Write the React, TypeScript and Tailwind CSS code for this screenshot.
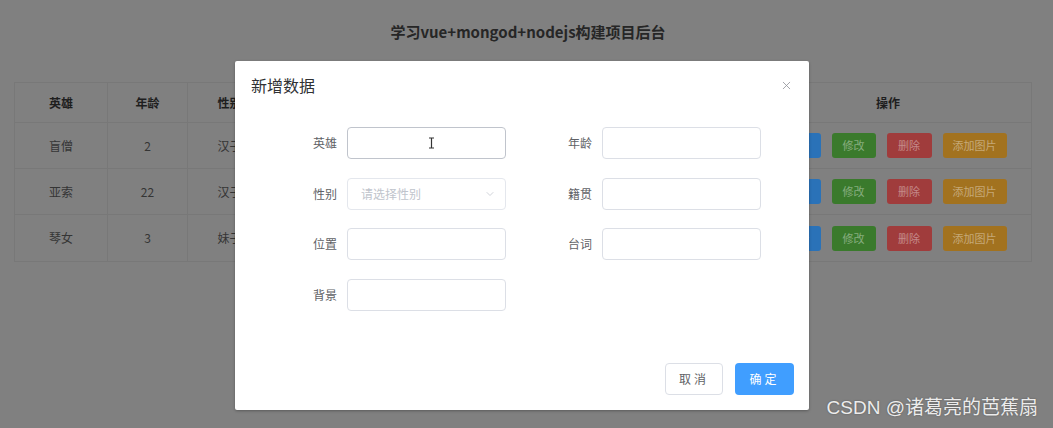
import { X, ChevronDown } from 'lucide-react';

const font = { fontFamily: '"Noto Sans CJK SC", "Noto Sans", sans-serif' };

const heroes = [
  { name: '盲僧', age: '2', sex: '汉子' },
  { name: '亚索', age: '22', sex: '汉子' },
  { name: '琴女', age: '3', sex: '妹子' },
];

function ActionButtons() {
  return (
    <div className="ml-[7px] flex items-center justify-center gap-[11px] text-[11px] text-white/40">
      <span className="w-[44px] h-[25px] rounded-[3px] bg-[#2a72b8] flex items-center justify-center">查看</span>
      <span className="w-[44px] h-[25px] rounded-[3px] bg-[#3a7a2c] flex items-center justify-center">修改</span>
      <span className="w-[45px] h-[25px] rounded-[3px] bg-[#a03c3c] flex items-center justify-center">删除</span>
      <span className="w-[64px] h-[25px] rounded-[3px] bg-[#a2721f] flex items-center justify-center">添加图片</span>
    </div>
  );
}

function Field({ label, children }: { label: string; children?: React.ReactNode }) {
  return (
    <div className="flex items-center">
      <label className="w-[70px] pr-[10px] text-right text-[12px] text-[#606266]">{label}</label>
      {children ?? (
        <input className="w-[159px] h-8 rounded-[4px] border border-[#dcdfe6] bg-white outline-none" />
      )}
    </div>
  );
}

export default function App() {
  return (
    <div className="relative w-[1053px] h-[428px] overflow-hidden bg-[#808080]" style={font}>
      {/* 背景页面（已被遮罩） */}
      <div className="pt-[22px]">
        <h1 className="text-center text-[15px] font-bold text-[#262626] leading-5 pl-[3px]">
          学习vue+mongod+nodejs构建项目后台
        </h1>
        <div className="mx-[14px] mt-[40px] w-[1018px] border border-[#787878] text-[12px] text-[#353535]">
          <div className="flex h-10 items-center font-bold text-[#1e1e1e] border-b border-[#787878]">
            <div className="w-[93px] h-full flex items-center justify-center border-r border-[#787878]">英雄</div>
            <div className="w-[80px] h-full flex items-center justify-center border-r border-[#787878]">年龄</div>
            <div className="w-[84px] h-full flex items-center justify-center border-r border-[#787878]">性别</div>
            <div className="flex-1 h-full border-r border-[#787878]" />
            <div className="w-[286px] h-full flex items-center justify-center">操作</div>
          </div>
          {heroes.map((h, i) => (
            <div key={i} className={`flex h-[46px] items-center ${i < 2 ? 'border-b border-[#787878]' : ''}`}>
              <div className="w-[93px] h-full flex items-center justify-center border-r border-[#787878]">{h.name}</div>
              <div className="w-[80px] h-full flex items-center justify-center border-r border-[#787878]">{h.age}</div>
              <div className="w-[84px] h-full flex items-center justify-center border-r border-[#787878]">{h.sex}</div>
              <div className="flex-1 h-full border-r border-[#787878]" />
              <div className="w-[286px] h-full flex items-center justify-center">
                <ActionButtons />
              </div>
            </div>
          ))}
        </div>
      </div>

      {/* 新增数据弹窗 */}
      <div className="absolute left-[235px] top-[61px] w-[574px] h-[349px] bg-white rounded-[2px] shadow-[0_1px_3px_rgba(0,0,0,0.3)] flex flex-col">
        <div className="flex items-center justify-between pl-4 pr-[16px] pt-[13px]">
          <span className="text-[16px] leading-[22px] text-[#303133]">新增数据</span>
          <X className="w-[13px] h-[13px] text-[#909399]" strokeWidth={1.5} />
        </div>
        <div className="grid grid-cols-[229px_229px] gap-x-[26px] gap-y-[18.5px] pl-[42px] mt-[31px]">
          <Field label="英雄">
            <div className="relative w-[159px] h-8 rounded-[4px] border border-[#c0c4cc] bg-white">
              <svg className="absolute left-[80px] top-[9px]" width="7" height="12" viewBox="0 0 7 12">
                <path d="M1 1h5M3.5 1v10M1 11h5" stroke="#333" strokeWidth="1.2" fill="none" />
              </svg>
            </div>
          </Field>
          <Field label="年龄" />
          <Field label="性别">
            <div className="w-[159px] h-8 rounded-[4px] border border-[#e4e7ed] bg-white flex items-center justify-between pl-[13px] pr-[9px]">
              <span className="text-[12px] text-[#c0c4cc]">请选择性别</span>
              <ChevronDown className="w-[12px] h-[12px] text-[#c0c4cc]" strokeWidth={1.5} />
            </div>
          </Field>
          <Field label="籍贯" />
          <Field label="位置" />
          <Field label="台词" />
          <Field label="背景" />
        </div>
        <div className="mt-auto flex justify-end gap-[12px] pr-[15px] pb-[15px]">
          <button className="w-[58px] h-8 rounded-[4px] border border-[#dcdfe6] bg-white text-[12px] text-[#606266] tracking-[3px]">
            取消
          </button>
          <button className="w-[59px] h-8 rounded-[4px] bg-[#409eff] text-[12px] text-white tracking-[3px]">
            确定
          </button>
        </div>
      </div>

      {/* 水印 */}
      <div
        className="absolute right-[15px] bottom-[8px] text-[19px] leading-6 text-[#ececec] [text-shadow:0_0_2px_rgba(0,0,0,0.35)]"
        style={{ fontFamily: '"Liberation Sans", "Noto Sans CJK SC", sans-serif' }}
      >
        CSDN @诸葛亮的芭蕉扇
      </div>
    </div>
  );
}
